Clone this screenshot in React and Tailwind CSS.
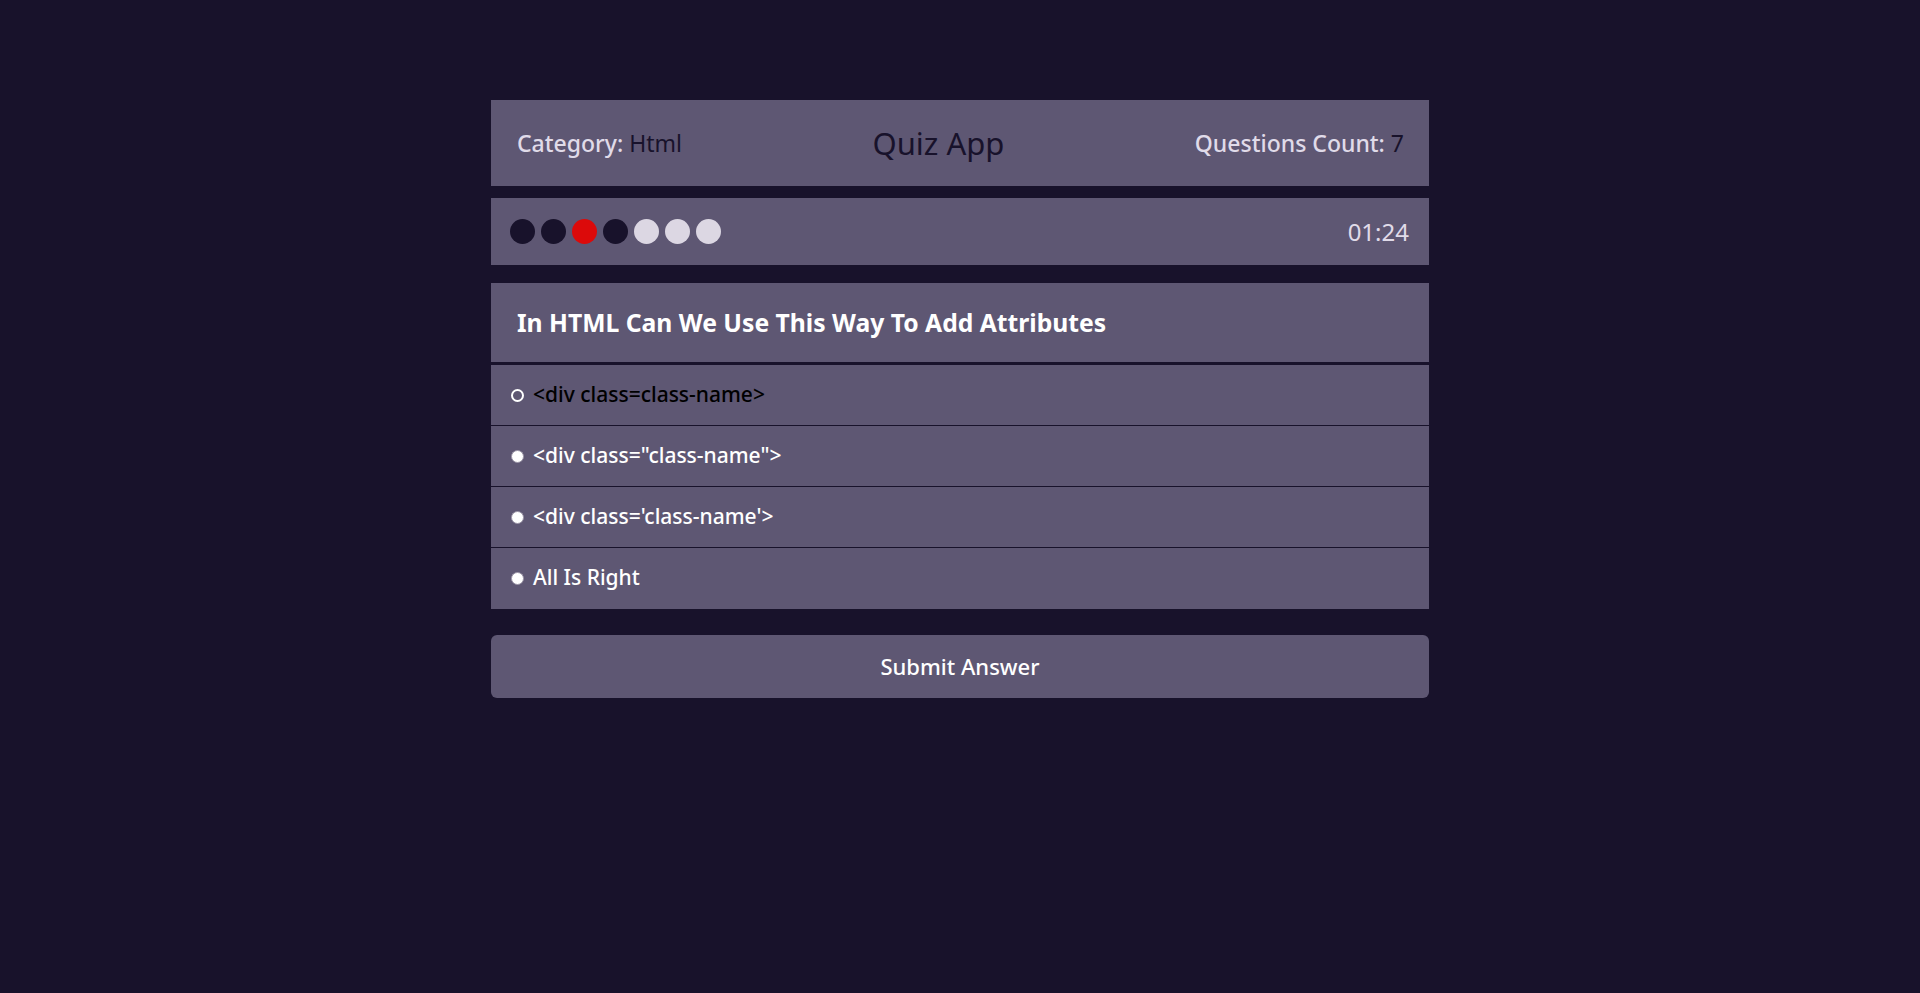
const answers = [
  { text: "<div class=class-name>", checked: true },
  { text: '<div class="class-name">', checked: false },
  { text: "<div class='class-name'>", checked: false },
  { text: "All Is Right", checked: false },
];

const bullets = ["done", "done", "wrong", "done", "todo", "todo", "todo"];

function Bullet({ state }) {
  const color =
    state === "wrong" ? "bg-[#dc0a0a]" : state === "done" ? "bg-[#18122b]" : "bg-[#dcd7e3]";
  return <span className={`block w-[25px] h-[25px] rounded-full ${color}`} />;
}

export default function App() {
  return (
    <div
      className="min-h-screen bg-[#18122b] pt-[100px]"
      style={{ fontFamily: '"Noto Sans", "Open Sans", sans-serif' }}
    >
      <div className="w-[938px] ml-[491px]">
        {/* header */}
        <div className="h-[86px] bg-[#5e5773] flex items-center justify-between px-[26px] pr-[25px]">
          <div className="text-[23px] text-[#e0dbe9] font-medium">
            Category: <span className="text-[#18122b] font-normal">Html</span>
          </div>
          <h1 className="text-[31px] text-[#18122b] font-normal">Quiz App</h1>
          <div className="text-[23px] text-[#e0dbe9] font-medium">
            Questions Count: <span className="text-[#18122b] font-normal">7</span>
          </div>
        </div>

        {/* bullets + timer */}
        <div className="h-[67px] mt-[12px] bg-[#5e5773] flex items-center justify-between pl-[19px] pr-[20px]">
          <div className="flex gap-[6px]">
            {bullets.map((b, i) => (
              <Bullet key={i} state={b} />
            ))}
          </div>
          <div className="text-[24px] text-[#e0dbe9]">01:24</div>
        </div>

        {/* question */}
        <div className="mt-[18px] h-[79px] bg-[#5e5773] flex items-center px-[26px] border-b-[3px] border-[#18122b] box-content">
          <h2 className="text-[24.7px] font-bold text-white">In HTML Can We Use This Way To Add Attributes</h2>
        </div>

        <div className="flex flex-col">
          {answers.map((a, i) => (
            <label
              key={i}
              className={`h-[60px] box-content bg-[#5e5773] flex items-center pl-[20px] gap-[9px] border-b ${
                i < answers.length - 1 ? "border-[#18122b]" : "border-[#5e5773]"
              }`}
            >
              {a.checked ? (
                <span className="w-[13px] h-[13px] rounded-full border-2 border-white bg-[#5e5773]" />
              ) : (
                <span className="w-[13px] h-[13px] rounded-full bg-white border border-[#9a94a6]" />
              )}
              <span className={`text-[21px] font-medium ${a.checked ? "text-black" : "text-white"}`}>
                {a.text}
              </span>
            </label>
          ))}
        </div>

        <button className="mt-[26px] w-full h-[63px] rounded-[6px] bg-[#5e5773] text-white text-[22px] font-medium">
          Submit Answer
        </button>
      </div>
    </div>
  );
}
